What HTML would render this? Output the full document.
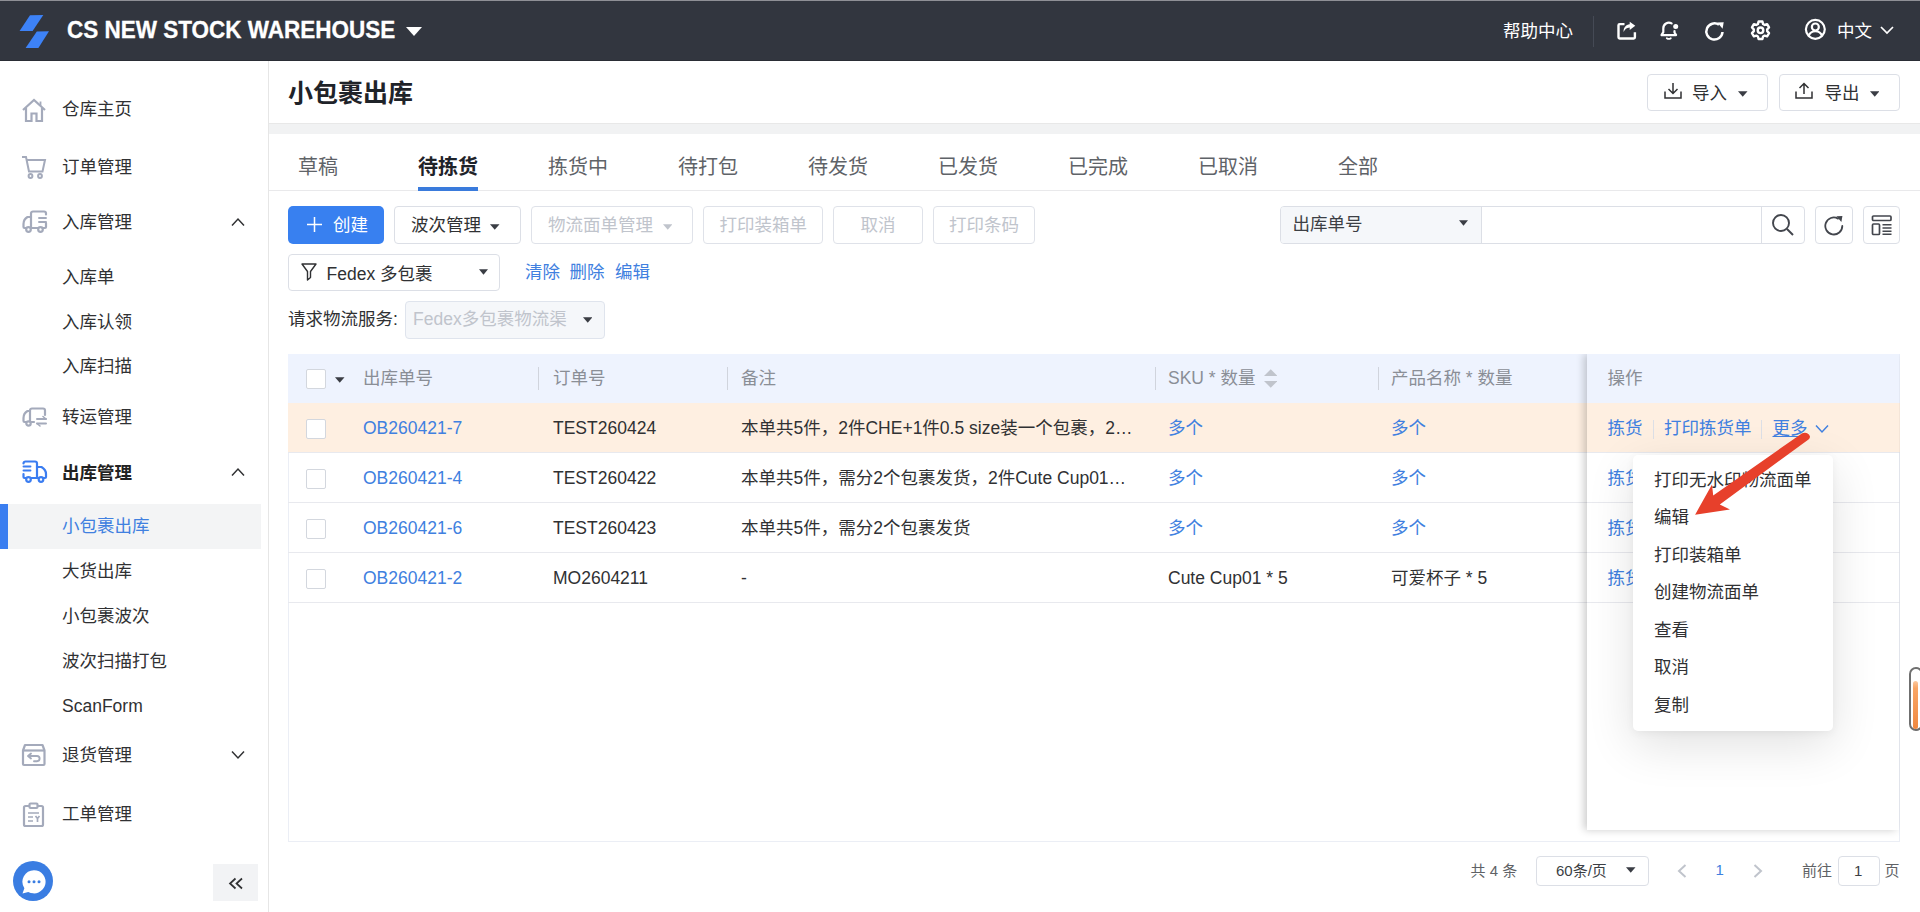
<!DOCTYPE html>
<html lang="zh-CN">
<head>
<meta charset="utf-8">
<title>小包裹出库</title>
<style>
*{box-sizing:border-box;margin:0;padding:0}
html,body{width:1920px;height:912px;overflow:hidden;background:#fff}
body{font-family:"Liberation Sans","Noto Sans CJK SC",sans-serif;font-size:16px;color:#303133;position:relative}
.abs{position:absolute}
.t{position:absolute;white-space:nowrap;line-height:1}
svg{display:block}
/* header */
#hdr{left:0;top:0;width:1920px;height:61px;background:#32363f}
#hdr .strip{left:0;top:0;width:1920px;height:1px;background:#8f9096}
/* sidebar */
#side{left:0;top:61px;width:269px;height:851px;background:#fff;border-right:1px solid #e6e6e6}
.mi{position:absolute;left:62px;white-space:nowrap;line-height:1;font-size:17.5px;color:#303133;transform:translateY(-50%)}
.mi.b{font-weight:bold;color:#222}
.ic{position:absolute;left:20px;width:28px;height:28px}
.chev{position:absolute;left:230px;width:14px;height:8px}
/* main */
.btn{position:absolute;border:1px solid #dcdfe6;border-radius:4px;background:#fff;height:37px}
.btn.dis{border-color:#dfe2e9}
.tab{position:absolute;top:155px;font-size:20px;line-height:24px;color:#5f6368;white-space:nowrap}
.tab.on{font-weight:bold;color:#1f2329}
.cb{position:absolute;left:306px;width:20px;height:20px;border:1px solid #d3d7de;border-radius:2px;background:#fff}
.th{top:368px;font-size:17.5px;line-height:20px;color:#8a8e96}
.td{font-size:17.5px;line-height:20px;color:#303133}
.lnk{color:#4080e0}
.gray{color:#8b8f97}
</style>
</head>
<body>
<!-- HEADER -->
<div id="hdr" class="abs"><div class="strip abs"></div><div class="abs" style="left:0;top:60px;width:1920px;height:1px;background:#2a2d35"></div>
<svg class="abs" style="left:18px;top:13px" width="34" height="37" viewBox="18 13 34 37"><polygon points="30,15.2 43.3,15 32.6,31 19.6,31" fill="#3d82f7"/><polygon points="36.8,31.4 49,31.3 38.4,48 25.6,48" fill="#3d82f7"/></svg>
<div class="t" style="left:67px;top:18px;font-size:22.5px;font-weight:bold;color:#fff;line-height:26px;transform:scaleY(1.1);transform-origin:0 20px;-webkit-text-stroke:.3px #fff">CS NEW STOCK WAREHOUSE</div>
<svg class="abs" style="left:406px;top:27px" width="16" height="9" viewBox="0 0 16 9"><polygon points="0,0 16,0 8,9" fill="#fff"/></svg>
<div class="t" style="left:1503px;top:21px;font-size:17.5px;color:#fff;line-height:20px">帮助中心</div>
<div class="abs" style="left:1593px;top:16px;width:1px;height:31px;background:#454a55"></div>
<!-- share -->
<svg class="abs" style="left:1616px;top:20px" width="22" height="22" viewBox="0 0 22 22" fill="none" stroke="#fff" stroke-width="2.400"><path d="M8.500 4.100H3.700a1.200 1.200 0 0 0-1.200 1.200V17.300a1.200 1.200 0 0 0 1.200 1.200H17.700a1.200 1.200 0 0 0 1.200-1.200V12.300"/><path d="M13.700 1.700L19.300 5.800L13.700 10V7.500C10.500 7.700 8.800 9.200 7.600 12C7.400 7.600 9.800 4.600 13.700 4.200Z" fill="#fff" stroke="none"/></svg>
<!-- bell -->
<svg class="abs" style="left:1659px;top:20px" width="22" height="22" viewBox="0 0 22 22" fill="none" stroke="#fff" stroke-width="2.200" stroke-linecap="round" stroke-linejoin="round"><path d="M12.600 3.400A5.600 5.600 0 0 0 4.300 8.400v3.800L2.500 15.100h14.600l-1.600-2.600v-1.400"/><path d="M7.800 18.200q2 1.400 4 0" stroke-width="1.800"/><circle cx="16.700" cy="6.600" r="2.500" fill="#fff" stroke="none"/></svg>
<!-- refresh -->
<svg class="abs" style="left:1703px;top:20px" width="22" height="22" viewBox="0 0 22 22" fill="none" stroke="#fff" stroke-width="2.500" stroke-linecap="butt"><path d="M19.500 12A8.100 8.100 0 1 1 16 4.800"/><path d="M14.300 2.600L20.700 2.300L19.600 8.800z" fill="#fff" stroke="none"/></svg>
<!-- gear -->
<svg class="abs" style="left:1749px;top:19px" width="23" height="23" viewBox="0 0 24 24" fill="none" stroke="#fff" stroke-width="2.500" stroke-linejoin="round"><path d="M10 2.600h4l.7 2.700 1.600.9 2.600-.8 2 3.400-1.900 2v1.900l1.900 2-2 3.400-2.600-.8-1.600.9-.7 2.700h-4l-.7-2.700-1.600-.9-2.600.8-2-3.400 1.900-2v-1.900l-1.900-2 2-3.400 2.600.8 1.600-.9z"/><circle cx="12" cy="11.800" r="2.900"/></svg>
<!-- user -->
<svg class="abs" style="left:1804.250px;top:18.250px" width="22.700" height="22.700" viewBox="0 0 24 24" fill="none" stroke="#fff" stroke-width="2.300"><circle cx="12" cy="12" r="10"/><circle cx="12" cy="9.500" r="3.700"/><path d="M5 19c1-3.500 4-5 7-5s6 1.500 7 5"/></svg>
<div class="t" style="left:1837px;top:21px;font-size:17.5px;color:#fff;line-height:20px">中文</div>
<svg class="abs" style="left:1880px;top:26px" width="14" height="9" viewBox="0 0 14 9" fill="none" stroke="#fff" stroke-width="1.700"><path d="M1 1l6 6 6-6"/></svg>
</div>
<!-- SIDEBAR -->
<div id="side" class="abs"></div>
<div id="sidec">
<div class="abs" style="left:0;top:504px;width:261px;height:45px;background:#f3f4f5"></div>
<div class="abs" style="left:0;top:504px;width:8px;height:45px;background:#3a7ef0"></div>
<!-- home -->
<svg class="abs" style="left:21px;top:97px" width="26" height="26" viewBox="0 0 26 26" fill="none" stroke="#a4aabb" stroke-width="2.200" stroke-linejoin="miter"><path d="M2 13L13 3l11 10"/><path d="M5 11v13h5.500v-7.500h5V24H21V11"/><path d="M19.500 4.500v4" stroke-width="1.800"/></svg>
<!-- cart -->
<svg class="abs" style="left:21px;top:155px" width="26" height="25" viewBox="0 0 26 25" fill="none" stroke="#a4aabb" stroke-width="2"><path d="M1 2h4l3 14.500h13.500L24 5H6"/><circle cx="9.500" cy="21" r="1.900"/><circle cx="19" cy="21" r="1.900"/></svg>
<!-- truck in -->
<svg class="abs" style="left:21px;top:210px" width="28" height="24" viewBox="0 0 28 24" fill="none" stroke="#a4aabb" stroke-width="2.200" stroke-linecap="round" stroke-linejoin="round"><path d="M25 4.500V3.500A2 2 0 0 0 23 1.500H12a2 2 0 0 0-2 2V17"/><path d="M10 7H6.500C4 8.500 2.500 11 2.500 14v3a1 1 0 0 0 1 1H5"/><path d="M25 13v4a1 1 0 0 1-1 1h-2.500"/><path d="M10.500 18h6.500"/><path d="M18 8h7M18 12h7" stroke-width="1.900"/><circle cx="7.500" cy="19.500" r="2.300"/><circle cx="19.500" cy="19.500" r="2.300"/></svg>
<!-- transfer -->
<svg class="abs" style="left:21px;top:407px" width="27" height="21" viewBox="0 0 27 21" fill="none" stroke="#a4aabb" stroke-width="2.200" stroke-linecap="round" stroke-linejoin="round"><path d="M24 8V3.500a2 2 0 0 0-2-2H11a2 2 0 0 0-2 2V14"/><path d="M9 4H6.500C4 5.500 2.500 8 2.500 11v3a1 1 0 0 0 1 1H5"/><path d="M10.500 15H13"/><circle cx="7.500" cy="16.500" r="2.200"/><path d="M16 12h9M25 16.500h-9" stroke-width="2"/><path d="M22 9.500l3 2.500M19 19l-3-2.500" stroke-width="1.600"/></svg>
<!-- truck out (blue) -->
<svg class="abs" style="left:21px;top:460px" width="28" height="24" viewBox="0 0 28 24" fill="none" stroke="#3b7df1" stroke-width="2.200" stroke-linecap="round" stroke-linejoin="round"><path d="M2.500 3.500a2 2 0 0 1 2-2H14a2 2 0 0 1 2 2V17"/><path d="M16 7h4.500C23 8.500 25 11 25 14v3a1 1 0 0 1-1 1h-1.500"/><path d="M2.500 14v3a1 1 0 0 0 1 1H5"/><path d="M10.500 18H17"/><path d="M2.500 6.500h7M2.500 10.500h7" stroke-width="1.900"/><circle cx="7.500" cy="19.500" r="2.300"/><circle cx="20" cy="19.500" r="2.300"/></svg>
<!-- return -->
<svg class="abs" style="left:21px;top:743px" width="26" height="24" viewBox="0 0 26 24" fill="none" stroke="#a4aabb" stroke-width="2.200" stroke-linejoin="round"><path d="M2 7.500L4 2h17.500l2 5.500V21a1 1 0 0 1-1 1H3a1 1 0 0 1-1-1z"/><path d="M2 7.500h21.500"/><path d="M10 10.500l-3 2.500 3 2.500M7.500 13H16a2 2 0 0 1 0 5.200h-3" stroke-width="1.900" stroke-linecap="round"/></svg>
<!-- work order -->
<svg class="abs" style="left:22px;top:802px" width="24" height="26" viewBox="0 0 24 26" fill="none" stroke="#a4aabb" stroke-width="2.200" stroke-linejoin="round"><path d="M7 4H3.500a1.500 1.500 0 0 0-1.500 1.500v17A1.500 1.500 0 0 0 3.500 24h16a1.500 1.500 0 0 0 1.500-1.500v-17A1.500 1.500 0 0 0 19.500 4H16"/><rect x="7.500" y="1.500" width="8" height="4.500" rx="1"/><path d="M6 11h11M6 15h5M6 19h5" stroke-width="1.700"/><path d="M13.500 14l2 2.500 2-2.500M15.500 16.500V20" stroke-width="1.700"/></svg>
<div class="mi" style="top:110px">仓库主页</div>
<div class="mi" style="top:167.5px">订单管理</div>
<div class="mi" style="top:223px">入库管理</div>
<div class="mi" style="top:277.5px">入库单</div>
<div class="mi" style="top:322.5px">入库认领</div>
<div class="mi" style="top:367px">入库扫描</div>
<div class="mi" style="top:418px">转运管理</div>
<div class="mi b" style="top:473.5px">出库管理</div>
<div class="mi" style="top:527px;color:#4080e0">小包裹出库</div>
<div class="mi" style="top:572px">大货出库</div>
<div class="mi" style="top:617px">小包裹波次</div>
<div class="mi" style="top:662px">波次扫描打包</div>
<div class="mi" style="top:707px">ScanForm</div>
<div class="mi" style="top:756px">退货管理</div>
<div class="mi" style="top:815px">工单管理</div>
<svg class="abs" style="left:231px;top:217px" width="14" height="10" viewBox="0 0 14 10" fill="none" stroke="#303133" stroke-width="1.500"><path d="M1 8.500l6-6.500 6 6.500"/></svg>
<svg class="abs" style="left:231px;top:467px" width="14" height="10" viewBox="0 0 14 10" fill="none" stroke="#303133" stroke-width="1.500"><path d="M1 8.500l6-6.500 6 6.500"/></svg>
<svg class="abs" style="left:231px;top:750px" width="14" height="10" viewBox="0 0 14 10" fill="none" stroke="#303133" stroke-width="1.500"><path d="M1 1.500l6 6.500 6-6.500"/></svg>
<!-- chat -->
<div class="abs" style="left:13px;top:861px;width:40px;height:40px;border-radius:50%;background:#3a7de2"></div>
<svg class="abs" style="left:18.500px;top:866.500px" width="30" height="30" viewBox="0 0 24 24"><path d="M12 2.500a9.300 9.300 0 1 1-4.600 17.400L2.800 21.200l1.500-4.300A9.300 9.300 0 0 1 12 2.500z" fill="#fff"/><circle cx="8" cy="11.800" r="1.200" fill="#3a7de2"/><circle cx="12" cy="11.800" r="1.200" fill="#3a7de2"/><circle cx="16" cy="11.800" r="1.200" fill="#3a7de2"/></svg>
<!-- collapse -->
<div class="abs" style="left:213px;top:864px;width:45px;height:37px;background:#f2f3f5"></div>
<svg class="abs" style="left:228px;top:877px" width="16" height="13" viewBox="0 0 16 13" fill="none" stroke="#303133" stroke-width="1.700"><path d="M7.500 1.500L2 6.500l5.500 5M14 1.500L8.500 6.500l5.500 5"/></svg>
</div>
<!-- MAIN -->
<div id="main">
<!-- page head -->
<div class="t" style="left:288px;top:78px;font-size:25px;font-weight:bold;color:#1f2329;line-height:30px">小包裹出库</div>
<div class="btn" style="left:1647px;top:74px;width:121px"></div>
<svg class="abs" style="left:1664px;top:82px" width="18" height="17" viewBox="0 0 18 17" fill="none" stroke="#303133" stroke-width="1.500"><path d="M1 9.500V16h16V9.500"/><path d="M9 1v10M4.500 7L9 11.500 13.500 7"/></svg>
<div class="t" style="left:1692px;top:83px;font-size:17.5px;line-height:20px">导入</div>
<svg class="abs" style="left:1738px;top:90.5px" width="9.5" height="6" viewBox="0 0 10 6"><polygon points="0,0 10,0 5,6" fill="#3a3d44"/></svg>
<div class="btn" style="left:1778.500px;top:74px;width:121px"></div>
<svg class="abs" style="left:1795px;top:82px" width="18" height="17" viewBox="0 0 18 17" fill="none" stroke="#303133" stroke-width="1.500"><path d="M1 9.500V16h16V9.500"/><path d="M9 12V1.500M4.500 6L9 1.500 13.500 6"/></svg>
<div class="t" style="left:1824.500px;top:83px;font-size:17.5px;line-height:20px">导出</div>
<svg class="abs" style="left:1869.5px;top:90.5px" width="9.5" height="6" viewBox="0 0 10 6"><polygon points="0,0 10,0 5,6" fill="#3a3d44"/></svg>
<div class="abs" style="left:269px;top:123px;width:1651px;height:10.500px;background:#f1f2f3;border-top:1px solid #e8e8e8"></div>
<!-- tabs -->
<div class="abs" style="left:269px;top:190px;width:1651px;height:1px;background:#e9e9eb"></div>
<div class="abs" style="left:418px;top:187px;width:60px;height:4px;background:#3a7bdc"></div>
<div class="tab" style="left:298px">草稿</div>
<div class="tab on" style="left:418px">待拣货</div>
<div class="tab" style="left:548px">拣货中</div>
<div class="tab" style="left:678px">待打包</div>
<div class="tab" style="left:808px">待发货</div>
<div class="tab" style="left:938px">已发货</div>
<div class="tab" style="left:1068px">已完成</div>
<div class="tab" style="left:1198px">已取消</div>
<div class="tab" style="left:1338px">全部</div>
<!-- toolbar -->
<div class="abs" style="left:288px;top:206px;width:96px;height:38px;border-radius:5px;background:#3880f0"></div>
<svg class="abs" style="left:307px;top:217px" width="15" height="15" viewBox="0 0 15 15" stroke="#fff" stroke-width="1.500"><path d="M7.500 0v15M0 7.500h15"/></svg>
<div class="t" style="left:333px;top:215px;font-size:17.5px;line-height:20px;color:#fff">创建</div>
<div class="btn" style="left:394px;top:206px;width:127px;height:38px"></div>
<div class="t" style="left:411px;top:215px;font-size:17.5px;line-height:20px">波次管理</div>
<svg class="abs" style="left:490px;top:224px" width="9.5" height="6" viewBox="0 0 10 6"><polygon points="0,0 10,0 5,6" fill="#3a3d44"/></svg>
<div class="btn dis" style="left:531px;top:206px;width:162px;height:38px"></div>
<div class="t" style="left:548px;top:215px;font-size:17.5px;line-height:20px;color:#c0c4cc">物流面单管理</div>
<svg class="abs" style="left:662.5px;top:224px" width="9.5" height="6" viewBox="0 0 10 6"><polygon points="0,0 10,0 5,6" fill="#c0c4cc"/></svg>
<div class="btn dis" style="left:703px;top:206px;width:120px;height:38px"></div>
<div class="t" style="left:719.500px;top:215px;font-size:17.5px;line-height:20px;color:#c0c4cc">打印装箱单</div>
<div class="btn dis" style="left:833px;top:206px;width:90px;height:38px"></div>
<div class="t" style="left:860.500px;top:215px;font-size:17.5px;line-height:20px;color:#c0c4cc">取消</div>
<div class="btn dis" style="left:933px;top:206px;width:102px;height:38px"></div>
<div class="t" style="left:949px;top:215px;font-size:17.5px;line-height:20px;color:#c0c4cc">打印条码</div>
<!-- search -->
<div class="abs" style="left:1280px;top:206px;width:525px;height:38px;border:1px solid #dcdfe6;border-radius:4px;background:#fff"></div>
<div class="abs" style="left:1281px;top:207px;width:201px;height:36px;background:#f5f7fa;border-right:1px solid #dcdfe6;border-radius:3px 0 0 3px"></div>
<div class="t" style="left:1292.500px;top:214px;font-size:17.5px;line-height:20px;color:#3c3f45">出库单号</div>
<svg class="abs" style="left:1459px;top:219.5px" width="9" height="6" viewBox="0 0 10 6"><polygon points="0,0 10,0 5,6" fill="#3a3d44"/></svg>
<div class="abs" style="left:1761px;top:207px;width:1px;height:36px;background:#dcdfe6"></div>
<svg class="abs" style="left:1771px;top:213px" width="24" height="24" viewBox="0 0 24 24" fill="none" stroke="#43464d" stroke-width="1.900"><circle cx="10" cy="10" r="8"/><path d="M16 16l6 6"/></svg>
<div class="btn" style="left:1815px;top:206px;width:38px;height:38px"></div>
<svg class="abs" style="left:1823px;top:214px" width="22" height="22" viewBox="0 0 22 22" fill="none" stroke="#43464d" stroke-width="1.800" stroke-linecap="round"><path d="M19.300 12A8.500 8.500 0 1 1 15 4.600"/><path d="M13.400 2.300l6-.3-1 6z" fill="#43464d" stroke="none"/></svg>
<div class="btn" style="left:1863px;top:206px;width:37px;height:38px"></div>
<svg class="abs" style="left:1871px;top:214px" width="22" height="22" viewBox="0 0 22 22" fill="none" stroke="#43464d" stroke-width="1.700"><rect x="1.500" y="2" width="18.500" height="4.500" rx="1"/><rect x="1.500" y="10" width="7" height="10.500" rx="1"/><path d="M11.500 10.800h9M11.500 14h9M11.500 17.200h9M11.500 20.200h9" stroke-width="1.500"/></svg>
<!-- filter row -->
<div class="btn" style="left:288px;top:254px;width:212px;height:37px"></div>
<svg class="abs" style="left:301px;top:263px" width="16" height="18" viewBox="0 0 16 18" fill="none" stroke="#303133" stroke-width="1.400" stroke-linejoin="round"><path d="M1 1h14l-5.500 7.500v6L6.500 17V8.500z"/></svg>
<div class="t" style="left:326.500px;top:263.500px;font-size:17.5px;line-height:20px">Fedex 多包裹</div>
<svg class="abs" style="left:478.5px;top:268.5px" width="9" height="6" viewBox="0 0 10 6"><polygon points="0,0 10,0 5,6" fill="#3a3d44"/></svg>
<div class="t lnk" style="left:525px;top:262px;font-size:17.5px;line-height:20px">清除</div>
<div class="t lnk" style="left:569.500px;top:262px;font-size:17.5px;line-height:20px">删除</div>
<div class="t lnk" style="left:615px;top:262px;font-size:17.5px;line-height:20px">编辑</div>
<div class="t" style="left:288px;top:309px;font-size:17.5px;line-height:20px">请求物流服务:</div>
<div class="abs" style="left:405px;top:301px;width:200px;height:38px;border:1px solid #dfe4ed;border-radius:4px;background:#f5f7fa"></div>
<div class="t" style="left:413px;top:309px;font-size:17.5px;line-height:20px;color:#c0c4cc">Fedex多包裹物流渠</div>
<svg class="abs" style="left:582.5px;top:316.5px" width="9.5" height="6" viewBox="0 0 10 6"><polygon points="0,0 10,0 5,6" fill="#3a3d44"/></svg>
<!-- table -->
<div class="abs" style="left:288px;top:354px;width:1612px;height:488px;border:1px solid #ebeef5;border-top:none"></div>
<div class="abs" style="left:288px;top:354px;width:1612px;height:49px;background:#eef3fe"></div>
<div class="abs" style="left:288px;top:403px;width:1612px;height:50px;background:#feefe1"></div>
<div class="abs" style="left:288px;top:452px;width:1612px;height:1px;background:#e8e9ee"></div>
<div class="abs" style="left:288px;top:502px;width:1612px;height:1px;background:#e8e9ee"></div>
<div class="abs" style="left:288px;top:552px;width:1612px;height:1px;background:#e8e9ee"></div>
<div class="abs" style="left:288px;top:602px;width:1612px;height:1px;background:#e8e9ee"></div>
<div class="cb" style="top:369px"></div>
<svg class="abs" style="left:335px;top:377px" width="9.5" height="6" viewBox="0 0 10 6"><polygon points="0,0 10,0 5,6" fill="#3a3d44"/></svg>
<div class="t th" style="left:363px">出库单号</div>
<div class="t th" style="left:553px">订单号</div>
<div class="t th" style="left:741px">备注</div>
<div class="t th" style="left:1168px">SKU * 数量</div>
<div class="t th" style="left:1391px">产品名称 * 数量</div>
<div class="abs" style="left:537.75px;top:367px;width:1.500px;height:23px;background:#d0d4dd"></div>
<div class="abs" style="left:726.75px;top:367px;width:1.500px;height:23px;background:#d0d4dd"></div>
<div class="abs" style="left:1154.75px;top:367px;width:1.500px;height:23px;background:#d0d4dd"></div>
<div class="abs" style="left:1377.75px;top:367px;width:1.500px;height:23px;background:#d0d4dd"></div>
<svg class="abs" style="left:1263.500px;top:369px" width="13.500" height="19" viewBox="0 0 14 19"><polygon points="7,0 14,7 0,7" fill="#c0c4cc"/><polygon points="0,12 14,12 7,19" fill="#c0c4cc"/></svg>
<div class="cb" style="top:419px"></div>
<div class="t td lnk" style="left:363px;top:418px">OB260421-7</div>
<div class="t td" style="left:553px;top:418px">TEST260424</div>
<div class="t td" style="left:741px;top:418px">本单共5件，2件CHE+1件0.5 size装一个包裹，2…</div>
<div class="t td lnk" style="left:1168px;top:418px">多个</div>
<div class="t td lnk" style="left:1391px;top:418px">多个</div>
<div class="cb" style="top:469px"></div>
<div class="t td lnk" style="left:363px;top:468px">OB260421-4</div>
<div class="t td" style="left:553px;top:468px">TEST260422</div>
<div class="t td" style="left:741px;top:468px">本单共5件，需分2个包裹发货，2件Cute Cup01…</div>
<div class="t td lnk" style="left:1168px;top:468px">多个</div>
<div class="t td lnk" style="left:1391px;top:468px">多个</div>
<div class="cb" style="top:519px"></div>
<div class="t td lnk" style="left:363px;top:518px">OB260421-6</div>
<div class="t td" style="left:553px;top:518px">TEST260423</div>
<div class="t td" style="left:741px;top:518px">本单共5件，需分2个包裹发货</div>
<div class="t td lnk" style="left:1168px;top:518px">多个</div>
<div class="t td lnk" style="left:1391px;top:518px">多个</div>
<div class="cb" style="top:569px"></div>
<div class="t td lnk" style="left:363px;top:568px">OB260421-2</div>
<div class="t td" style="left:553px;top:568px">MO2604211</div>
<div class="t td" style="left:741px;top:568px">-</div>
<div class="t td" style="left:1168px;top:568px">Cute Cup01 * 5</div>
<div class="t td" style="left:1391px;top:568px">可爱杯子 * 5</div>
<!-- fixed right column -->
<div class="abs" style="left:1560px;top:354px;width:340px;height:488px;overflow:hidden"><div class="abs" style="left:27px;top:0;width:312px;height:476px;background:#fff;box-shadow:-3px 0 8px rgba(0,0,0,.2)"></div></div>
<div class="abs" style="left:1587px;top:354px;width:312px;height:49px;background:#eef3fe"></div>
<div class="abs" style="left:1587px;top:403px;width:312px;height:50px;background:#feefe1"></div>
<div class="abs" style="left:1587px;top:452px;width:312px;height:1px;background:#e8e9ee"></div>
<div class="abs" style="left:1587px;top:502px;width:312px;height:1px;background:#e8e9ee"></div>
<div class="abs" style="left:1587px;top:552px;width:312px;height:1px;background:#e8e9ee"></div>
<div class="abs" style="left:1587px;top:602px;width:312px;height:1px;background:#e8e9ee"></div>
<div class="t th" style="left:1607.500px">操作</div>
<div class="t td lnk" style="left:1607.500px;top:418px">拣货</div>
<div class="abs" style="left:1653px;top:420px;width:1px;height:19px;background:#dcdfe6"></div>
<div class="t td lnk" style="left:1664px;top:418px">打印拣货单</div>
<div class="abs" style="left:1761px;top:420px;width:1px;height:19px;background:#dcdfe6"></div>
<div class="t td lnk" style="left:1772.500px;top:418px;text-decoration:underline;text-underline-offset:2px">更多</div>
<svg class="abs" style="left:1815px;top:424px" width="14" height="10" viewBox="0 0 14 10" fill="none" stroke="#4080e0" stroke-width="1.500"><path d="M1 1.500l6 6.500 6-6.500"/></svg>
<div class="t td lnk" style="left:1607.500px;top:468px">拣货</div>
<div class="t td lnk" style="left:1607.500px;top:518px">拣货</div>
<div class="t td lnk" style="left:1607.500px;top:568px">拣货</div>
<!-- dropdown -->
<div class="abs" style="left:1633px;top:455px;width:200px;height:276px;background:#fff;border-radius:5px;box-shadow:0 14px 48px rgba(0,0,0,.12),0 2px 8px rgba(0,0,0,.05)"></div>
<div class="t td" style="left:1654px;top:469.5px">打印无水印物流面单</div>
<div class="t td" style="left:1654px;top:507.0px">编辑</div>
<div class="t td" style="left:1654px;top:544.5px">打印装箱单</div>
<div class="t td" style="left:1654px;top:582.0px">创建物流面单</div>
<div class="t td" style="left:1654px;top:619.5px">查看</div>
<div class="t td" style="left:1654px;top:657.0px">取消</div>
<div class="t td" style="left:1654px;top:694.5px">复制</div>
<!-- arrow -->
<svg class="abs" style="left:1690px;top:428px" width="126" height="92" viewBox="1690 428 126 92"><path d="M1802.200 433.200 Q1808 431.500 1810 436.500 Q1810 438.500 1808.500 439.500 L1719.800 504.400 L1730 509.500 L1695.100 514.700 L1712 484.500 L1713.200 495.400 Z" fill="#e7402b"/></svg>
<!-- right pill -->
<div class="abs" style="left:1909px;top:667px;width:14px;height:64px;border:2px solid #6f6f6f;border-radius:7px;background:#fff"></div>
<div class="abs" style="left:1913px;top:681px;width:4.500px;height:48px;border-radius:2.500px;background:linear-gradient(#fcc9a0,#f9a565 15%,#f08840)"></div>
<!-- pagination -->
<div class="t" style="left:1470.500px;top:861px;font-size:15px;line-height:20px;color:#606266">共 4 条</div>
<div class="btn" style="left:1536px;top:856px;width:113px;height:30px"></div>
<div class="t" style="left:1556px;top:861px;font-size:15px;line-height:20px;color:#3c3f45">60条/页</div>
<svg class="abs" style="left:1626px;top:867px" width="9.5" height="6" viewBox="0 0 10 6"><polygon points="0,0 10,0 5,6" fill="#3a3d44"/></svg>
<svg class="abs" style="left:1677px;top:864px" width="10" height="14" viewBox="0 0 10 14" fill="none" stroke="#c0c4cc" stroke-width="2"><path d="M8.500 1L2 7l6.500 6"/></svg>
<div class="t" style="left:1715.500px;top:860px;font-size:15px;line-height:20px;color:#4080e0">1</div>
<svg class="abs" style="left:1753px;top:864px" width="10" height="14" viewBox="0 0 10 14" fill="none" stroke="#c0c4cc" stroke-width="2"><path d="M1.500 1L8 7l-6.500 6"/></svg>
<div class="t" style="left:1802px;top:861px;font-size:15px;line-height:20px;color:#606266">前往</div>
<div class="btn" style="left:1838px;top:856px;width:42px;height:30px"></div>
<div class="t" style="left:1854px;top:861px;font-size:15px;line-height:20px;color:#3c3f45">1</div>
<div class="t" style="left:1884.500px;top:861px;font-size:15px;line-height:20px;color:#606266">页</div>

</div>
</body>
</html>
